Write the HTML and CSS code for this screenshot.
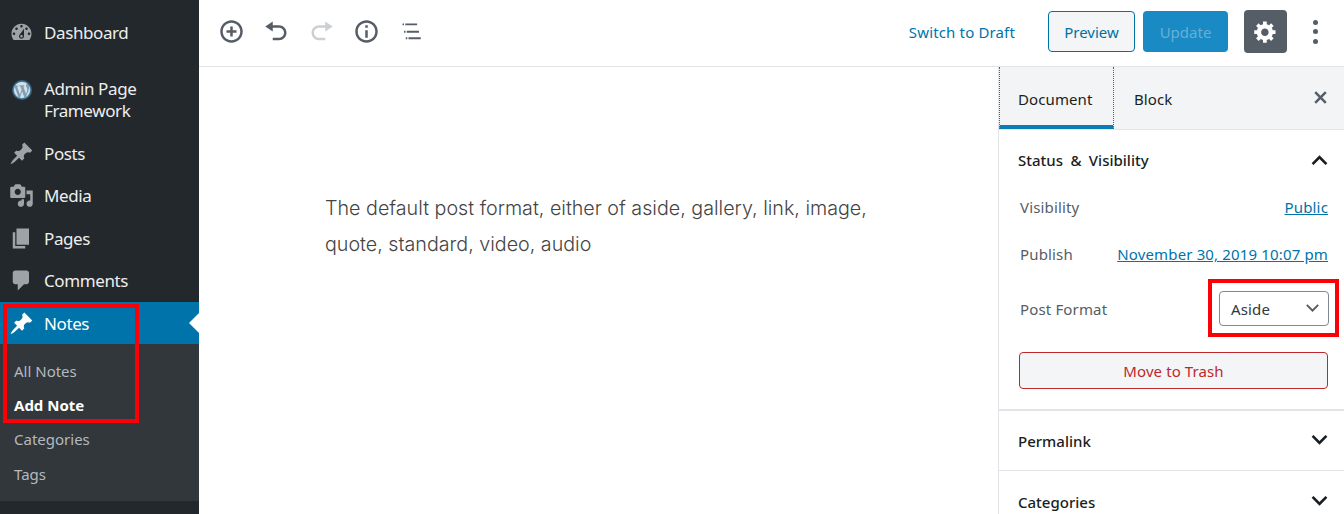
FILE: index.html
```html
<!DOCTYPE html>
<html lang="en">
  <head>
    <meta charset="UTF-8" />
    <meta name="viewport" content="width=device-width, initial-scale=1.0" />
    <title>Edit Note</title>
    <link rel="stylesheet" href="styles.css">
  </head>
  <body>
    <div class="app">
      <nav class="menu">
        <a class="menu-item first">
          <svg class="menu-icon" viewBox="0 0 20 20"><path d="M3.76 16h12.48c1.1-1.37 1.76-3.11 1.76-5 0-4.42-3.58-8-8-8s-8 3.58-8 8c0 1.89.66 3.63 1.76 5zM10 4c.55 0 1 .45 1 1s-.45 1-1 1-1-.45-1-1 .45-1 1-1zM6 6c.55 0 1 .45 1 1s-.45 1-1 1-1-.45-1-1 .45-1 1-1zm8 0c.55 0 1 .45 1 1s-.45 1-1 1-1-.45-1-1 .45-1 1-1zm-5.37 5.55L12 7v6c0 1.1-.9 2-2 2s-2-.9-2-2c0-.57.24-1.08.63-1.45zM4 10c.55 0 1 .45 1 1s-.45 1-1 1-1-.45-1-1 .45-1 1-1zm12 0c.55 0 1 .45 1 1s-.45 1-1 1-1-.45-1-1 .45-1 1-1zm-5 3c0-.55-.45-1-1-1s-1 .45-1 1 .45 1 1 1 1-.45 1-1z"/></svg>
          <span>Dashboard</span>
        </a>
        <a class="menu-item two-line">
          <svg class="menu-icon wp-logo" viewBox="0 0 20 20"><circle cx="10" cy="10" r="10" fill="#2f6788"/><circle cx="10" cy="10" r="8.6" fill="#7f9db3"/><path fill="#d5dfe6" d="M8.01 14.82L4.96 6.61c.49-.03 1.05-.08 1.05-.08.43-.05.38-1.01-.06-.99 0 0-1.29.1-2.13.1-.15 0-.33 0-.52-.01 1.44-2.17 3.9-3.6 6.7-3.6 2.09 0 3.99.79 5.41 2.09-.6-.08-1.45.35-1.45 1.42 0 .66.38 1.22.79 1.88.31.54.5 1.22.5 2.21 0 1.34-1.27 4.48-1.27 4.48l-2.71-7.5c.48-.03.75-.16.75-.16.43-.05.38-1.1-.05-1.08 0 0-1.3.11-2.14.11-.78 0-2.11-.11-2.11-.11-.43-.02-.48 1.06-.05 1.08l.84.08 1.12 3.04zm6.02 2.15L16.64 10s.67-1.69.39-3.81c.63 1.14.94 2.42.94 3.81 0 2.96-1.56 5.58-3.94 6.97zM2.68 6.77L6.5 17.25c-2.67-1.3-4.47-4.08-4.47-7.25 0-1.16.2-2.23.65-3.23zm7.45 4.53l2.29 6.25c-.75.27-1.57.42-2.42.42-.72 0-1.41-.11-2.06-.3z"/></svg>
          <span>Admin Page<br />Framework</span>
        </a>
        <a class="menu-item">
          <svg class="menu-icon" viewBox="0 0 20 20"><path d="M10.44 3.02l1.82-1.82 6.36 6.35-1.83 1.82c-1.05-.68-2.48-.57-3.41.36l-.75.75c-.92.93-1.04 2.35-.35 3.41l-1.83 1.82-2.41-2.41-2.8 2.79c-.42.42-3.38 2.71-3.8 2.29s1.86-3.39 2.28-3.81l2.79-2.79L4.1 9.36l1.83-1.82c1.05.69 2.48.57 3.4-.36l.75-.75c.93-.92 1.05-2.35.36-3.41z"/></svg>
          <span>Posts</span>
        </a>
        <a class="menu-item">
          <svg class="menu-icon" viewBox="0 0 20 20"><path d="M13 11V4c0-.55-.45-1-1-1h-1.67L9 1H5L3.67 3H2c-.55 0-1 .45-1 1v7c0 .55.45 1 1 1h10c.55 0 1-.45 1-1zM7 4.5c1.38 0 2.5 1.12 2.5 2.5S8.38 9.5 7 9.5 4.5 8.38 4.5 7 5.62 4.5 7 4.5zM14 6h5v10.5c0 1.38-1.12 2.5-2.5 2.5S14 17.88 14 16.5s1.12-2.5 2.5-2.5c.17 0 .34.02.5.05V9h-3V6zm-4 8.05V13h2v3.5c0 1.38-1.12 2.5-2.5 2.5S7 17.88 7 16.5 8.12 14 9.5 14c.17 0 .34.02.5.05z"/></svg>
          <span>Media</span>
        </a>
        <a class="menu-item">
          <svg class="menu-icon" viewBox="0 0 20 20"><path d="M6 15V2h10v13H6zm-1 1h8v2H3V5h2v11z"/></svg>
          <span>Pages</span>
        </a>
        <a class="menu-item">
          <svg class="menu-icon" viewBox="0 0 20 20"><path d="M5 2h9c1.1 0 2 .9 2 2v7c0 1.1-.9 2-2 2h-2l-5 5v-5H5c-1.1 0-2-.9-2-2V4c0-1.1.9-2 2-2z"/></svg>
          <span>Comments</span>
        </a>
        <a class="menu-item current">
          <svg class="menu-icon" viewBox="0 0 20 20"><path d="M10.44 3.02l1.82-1.82 6.36 6.35-1.83 1.82c-1.05-.68-2.48-.57-3.41.36l-.75.75c-.92.93-1.04 2.35-.35 3.41l-1.83 1.82-2.41-2.41-2.8 2.79c-.42.42-3.38 2.71-3.8 2.29s1.86-3.39 2.28-3.81l2.79-2.79L4.1 9.36l1.83-1.82c1.05.69 2.48.57 3.4-.36l.75-.75c.93-.92 1.05-2.35.36-3.41z"/></svg>
          <span>Notes</span>
        </a>
        <div class="submenu">
          <a>All Notes</a>
          <a class="active">Add Note</a>
          <a>Categories</a>
          <a>Tags</a>
        </div>
      </nav>

      <div class="editor">
        <header class="toolbar">
          <div class="tools">
            <svg class="tool" viewBox="0 0 20 20"><path d="M10 1c-5 0-9 4-9 9s4 9 9 9 9-4 9-9-4-9-9-9zm0 16c-3.9 0-7-3.1-7-7s3.1-7 7-7 7 3.1 7 7-3.1 7-7 7zm1-11H9v3H6v2h3v3h2v-3h3V9h-3V6z"/></svg>
            <svg class="tool" viewBox="0 0 20 20"><path d="M12 5H7V2L1 6l6 4V7h5c2.2 0 4 1.8 4 4s-1.8 4-4 4H7v2h5c3.3 0 6-2.7 6-6s-2.7-6-6-6z"/></svg>
            <svg class="tool off" viewBox="0 0 20 20"><path d="M8 5h5V2l6 4-6 4V7H8c-2.2 0-4 1.8-4 4s1.8 4 4 4h5v2H8c-3.3 0-6-2.7-6-6s2.7-6 6-6z"/></svg>
            <svg class="tool" viewBox="0 0 20 20"><path d="M10 1c-5 0-9 4-9 9s4 9 9 9 9-4 9-9-4-9-9-9zm0 16c-3.9 0-7-3.1-7-7s3.1-7 7-7 7 3.1 7 7-3.1 7-7 7zm1-10H9V5h2v2zm0 8H9V9h2v6z"/></svg>
            <svg class="tool" viewBox="0 0 20 20"><path d="M2.8 3.5H4v1.5H2.8zM5 3.5h9.5v1.5H5zM4 9.4h1.2v1.5H4zM6.2 9.4H16v1.5H6.2zM5.4 14.6h1.2v1.5H5.4zM7.6 14.6h9.8v1.5H7.6z"/></svg>
          </div>
          <div class="actions">
            <a class="draft">Switch to Draft</a>
            <button class="btn preview">Preview</button>
            <button class="btn update">Update</button>
            <button class="gear">
              <svg viewBox="0 0 20 20"><path d="M18 12h-2.18c-.17.7-.44 1.35-.81 1.93l1.54 1.54-2.1 2.1-1.54-1.54c-.58.36-1.23.63-1.91.79V19H8v-2.18c-.68-.16-1.33-.43-1.91-.79l-1.54 1.54-2.12-2.12 1.54-1.54c-.36-.58-.63-1.23-.79-1.91H1V9.03h2.17c.16-.7.44-1.35.8-1.94L2.43 5.55l2.1-2.1 1.54 1.54c.58-.37 1.24-.64 1.93-.81V2h3v2.18c.68.16 1.33.43 1.91.79l1.54-1.54 2.12 2.12-1.54 1.54c.36.59.64 1.24.8 1.94H18V12zm-8.5 1.5c1.66 0 3-1.34 3-3s-1.34-3-3-3-3 1.34-3 3 1.34 3 3 3z"/></svg>
            </button>
            <div class="dots"><i></i><i></i><i></i></div>
          </div>
        </header>

        <div class="workspace">
          <main class="content">
            <p>The default post format, either of aside, gallery, link, image, quote, standard, video, audio</p>
          </main>
          <aside class="panel">
            <div class="tabs">
              <div class="tab selected">Document</div>
              <div class="tab">Block</div>
              <svg class="close" viewBox="0 0 20 20"><path d="M14.95 6.46L11.41 10l3.54 3.54-1.41 1.41L10 11.42l-3.53 3.53-1.42-1.42L8.58 10 5.05 6.47l1.42-1.42L10 8.58l3.54-3.53z"/></svg>
            </div>
            <section class="status">
              <h3 class="section-head"><span class="status-title">Status &amp; Visibility</span>
                <svg class="chevron" viewBox="0 0 20 20"><path d="M2.5 13.5L10 6l7.5 7.5-1.8 1.7L10 9.6l-5.7 5.6z"/></svg>
              </h3>
              <div class="row visibility"><span>Visibility</span><a>Public</a></div>
              <div class="row publish"><span>Publish</span><a>November 30, 2019 10:07 pm</a></div>
              <div class="row format">
                <span>Post Format</span>
                <div class="select">Aside
                  <svg viewBox="0 0 20 20"><path d="M2.5 6.5L10 14l7.5-7.5-1.6-1.5L10 10.9 4.1 5z"/></svg>
                </div>
              </div>
              <button class="trash">Move to Trash</button>
            </section>
            <section class="closed">
              <h3 class="section-head">Permalink
                <svg class="chevron" viewBox="0 0 20 20"><path d="M2.5 6.5L10 14l7.5-7.5-1.8-1.7L10 10.4 4.3 4.8z"/></svg>
              </h3>
            </section>
            <section class="closed">
              <h3 class="section-head">Categories
                <svg class="chevron" viewBox="0 0 20 20"><path d="M2.5 6.5L10 14l7.5-7.5-1.8-1.7L10 10.4 4.3 4.8z"/></svg>
              </h3>
            </section>
          </aside>
        </div>
      </div>
    </div>

    <div class="mark mark-menu"></div>
    <div class="mark mark-format"></div>
  </body>
</html>
```

FILE: styles.css
```css
* {
  margin: 0;
  padding: 0;
  box-sizing: border-box;
}
html,
body {
  height: 100%;
  overflow: hidden;
}
body {
  font-family: "Noto Sans", "Open Sans", sans-serif;
  font-size: 15px;
  color: #191e23;
  background-color: white;
}
.app {
  display: flex;
  height: 514px;
}

/* admin menu */
.menu {
  width: 199px;
  flex-shrink: 0;
  background-color: #23282d;
  color: #eeeeee;
}
.menu-item {
  display: flex;
  align-items: center;
  height: 42.5px;
  padding-left: 9px;
  font-size: 17px;
  letter-spacing: -0.4px;
}
.menu-item.first {
  height: 43px;
  margin-top: 11px;
  margin-bottom: 18px;
}
.menu-item.two-line {
  height: 56px;
  line-height: 22px;
  margin-bottom: 4px;
}
.menu-icon {
  width: 25px;
  height: 25px;
  margin-right: 10px;
  flex-shrink: 0;
  fill: #9ea3a8;
}
.wp-logo {
  width: 20px;
  height: 20px;
  margin-left: 3px;
  margin-right: 12px;
  margin-bottom: 20px;
}
.two-line span {
  margin-top: -1px;
}
.menu-item.current {
  position: relative;
  height: 42px;
  background-color: #0073aa;
  color: white;
}
.current .menu-icon {
  fill: white;
}
.current::after {
  content: "";
  position: absolute;
  right: 0;
  top: 11px;
  border: 10px solid transparent;
  border-right-color: white;
  border-left-width: 0;
}
.submenu {
  display: flex;
  flex-direction: column;
  height: 157px;
  padding: 10.4px 14px;
  background-color: #32373c;
  color: #b4b9be;
  font-size: 15px;
}
.submenu a {
  height: 34.6px;
  line-height: 34px;
}
.submenu .active {
  color: white;
  font-weight: 700;
}

/* top bar */
.editor {
  flex: 1;
  display: flex;
  flex-direction: column;
  min-width: 0;
}
.toolbar {
  display: flex;
  justify-content: space-between;
  align-items: center;
  height: 67px;
  padding-left: 20px;
  padding-bottom: 3px;
  border-bottom: 1px solid #e2e4e7;
}
.tools {
  display: flex;
  align-items: center;
  gap: 20px;
}
.tool {
  width: 25px;
  height: 25px;
  fill: #555d66;
}
.tool.off {
  fill: #ccd0d4;
}
.actions {
  display: flex;
  align-items: center;
}
.draft {
  margin-right: 33px;
  color: #0073aa;
  font-size: 15px;
  letter-spacing: 0.15px;
}
.btn {
  height: 41px;
  border-radius: 4px;
  font-family: inherit;
  font-size: 15px;
}
.preview {
  width: 87px;
  margin-right: 8px;
  background-color: #f3f5f6;
  border: 1px solid #0071a1;
  color: #0071a1;
}
.update {
  width: 85px;
  margin-right: 16px;
  background-color: #1a8ac4;
  border: none;
  color: #66b0d8;
}
.gear {
  display: flex;
  justify-content: center;
  align-items: center;
  width: 43px;
  height: 43px;
  background-color: #555d66;
  border: none;
  border-radius: 4px;
}
.gear svg {
  width: 25px;
  height: 25px;
  fill: white;
}
.dots {
  display: flex;
  flex-direction: column;
  align-items: center;
  gap: 4.5px;
  width: 57px;
}
.dots i {
  width: 5px;
  height: 5px;
  border-radius: 50%;
  background-color: #555d66;
}

/* editor area */
.workspace {
  flex: 1;
  display: flex;
  min-height: 0;
}
.content {
  flex: 1;
  padding: 123px 100px 0 126px;
  font-family: Inter, "Noto Sans", sans-serif;
  font-size: 19.7px;
  font-weight: 300;
  line-height: 36px;
  color: #444444;
}

/* settings panel */
.panel {
  width: 346px;
  flex-shrink: 0;
  border-left: 1px solid #e2e4e7;
  overflow: hidden;
}
.tabs {
  display: flex;
  align-items: center;
  position: relative;
  height: 63px;
  background-color: #f3f4f5;
  border-bottom: 1px solid #e2e4e7;
}
.tab {
  height: 62px;
  line-height: 65px;
  padding: 0 19px;
  font-size: 15px;
  letter-spacing: 0.1px;
}
.tab.selected {
  width: 115px;
  margin-right: 1px;
  border-left: 1px dotted #555d66;
  border-right: 1px dotted #555d66;
  border-bottom: 4px solid #0c7cb5;
  padding-left: 18px;
}
.close {
  position: absolute;
  right: 11px;
  top: 18px;
  width: 25px;
  height: 25px;
  fill: #555d66;
}
.section-head {
  display: flex;
  justify-content: space-between;
  align-items: center;
  font-size: 15px;
  font-weight: 500;
  color: #191e23;
}
.status-title {
  word-spacing: 3.5px;
}
.chevron {
  width: 21px;
  height: 21px;
  margin-right: -2px;
  fill: #191e23;
}
.status {
  height: 281px;
  padding: 19px 16px 0 19px;
  border-bottom: 2px solid #e2e4e7;
}
.row {
  display: flex;
  justify-content: space-between;
  align-items: center;
  margin-left: 2px;
  color: #555d66;
  font-size: 15px;
  letter-spacing: 0.15px;
}
.row a {
  color: #0073aa;
  text-decoration: underline;
}
.visibility {
  margin-top: 27px;
}
.publish {
  margin-top: 27px;
}
.format {
  margin-top: 27px;
  margin-right: -1px;
}
.select {
  display: flex;
  justify-content: space-between;
  align-items: center;
  width: 110px;
  height: 35px;
  padding: 0 7px 0 11px;
  border: 1px solid #7e8993;
  border-radius: 4px;
  color: #32373c;
}
.select svg {
  width: 17px;
  height: 17px;
  fill: #555d66;
}
.trash {
  width: 309px;
  height: 37px;
  margin-top: 26px;
  margin-left: 1px;
  background-color: #f3f5f6;
  border: 1px solid #c0272d;
  border-radius: 4px;
  color: #c0272d;
  font-family: inherit;
  font-size: 15px;
  letter-spacing: 0.1px;
}
.closed {
  height: 60px;
  padding: 19px 16px 0 19px;
  border-bottom: 1px solid #e2e4e7;
}
.closed + .closed {
  padding-top: 20px;
}

/* red annotation boxes drawn over the screenshot */
.mark {
  position: absolute;
  border: 4px solid #fb0007;
}
.mark-menu {
  left: 3px;
  top: 304px;
  width: 136px;
  height: 119px;
}
.mark-format {
  left: 1208px;
  top: 279px;
  width: 131px;
  height: 58px;
}
```
